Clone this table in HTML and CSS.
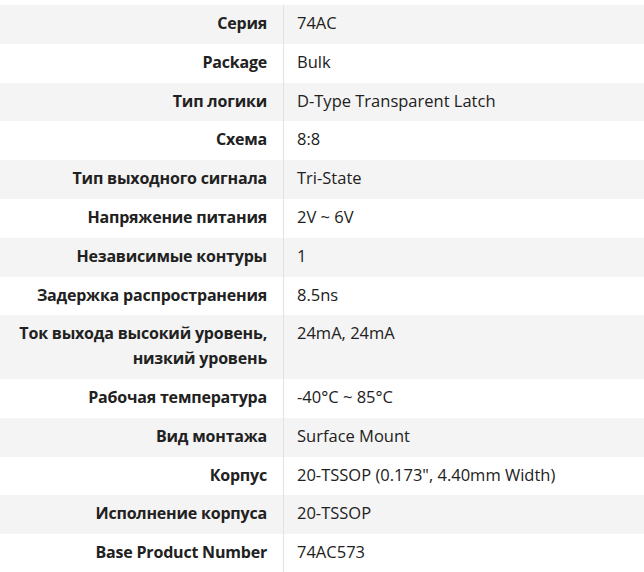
FILE: index.html
```html
<!DOCTYPE html>
<html lang="ru">
<head>
<meta charset="utf-8">
<link rel="stylesheet" href="styles.css">
</head>
<body>
<div class="specs">
  <div class="row"><div class="label">Серия</div><div class="value">74AC</div></div>
  <div class="row"><div class="label">Package</div><div class="value">Bulk</div></div>
  <div class="row"><div class="label">Тип логики</div><div class="value">D-Type Transparent Latch</div></div>
  <div class="row"><div class="label">Схема</div><div class="value">8:8</div></div>
  <div class="row"><div class="label">Тип выходного сигнала</div><div class="value">Tri-State</div></div>
  <div class="row"><div class="label">Напряжение питания</div><div class="value">2V ~ 6V</div></div>
  <div class="row"><div class="label">Независимые контуры</div><div class="value">1</div></div>
  <div class="row"><div class="label">Задержка распространения</div><div class="value">8.5ns</div></div>
  <div class="row"><div class="label">Ток выхода высокий уровень, низкий уровень</div><div class="value">24mA, 24mA</div></div>
  <div class="row"><div class="label">Рабочая температура</div><div class="value">-40°C ~ 85°C</div></div>
  <div class="row"><div class="label">Вид монтажа</div><div class="value">Surface Mount</div></div>
  <div class="row"><div class="label">Корпус</div><div class="value">20-TSSOP (0.173", 4.40mm Width)</div></div>
  <div class="row"><div class="label">Исполнение корпуса</div><div class="value">20-TSSOP</div></div>
  <div class="row"><div class="label">Base Product Number</div><div class="value">74AC573</div></div>
</div>
</body>
</html>
```
FILE: styles.css
```css
html, body {
  margin: 0;
  padding: 0;
  background: #ffffff;
}
body {
  padding-top: 5px;
  font-family: "Open Sans", "Noto Sans", sans-serif;
  font-size: 16px;
  line-height: 24.8px;
  color: #212121;
}
.specs {
  display: flex;
  flex-direction: column;
}
.row {
  display: flex;
}
.row:nth-child(odd) {
  background: #f4f4f4;
}
.label {
  width: 284px;
  box-sizing: border-box;
  flex: none;
  padding: 6px 16px 8px 18px;
  text-align: right;
  font-weight: 700;
  letter-spacing: -0.2px;
  border-right: 1px solid #e2e2e2;
}
.value {
  flex: 1;
  padding: 6px 14px 8px 13px;
  font-size: 16.5px;
}
```
